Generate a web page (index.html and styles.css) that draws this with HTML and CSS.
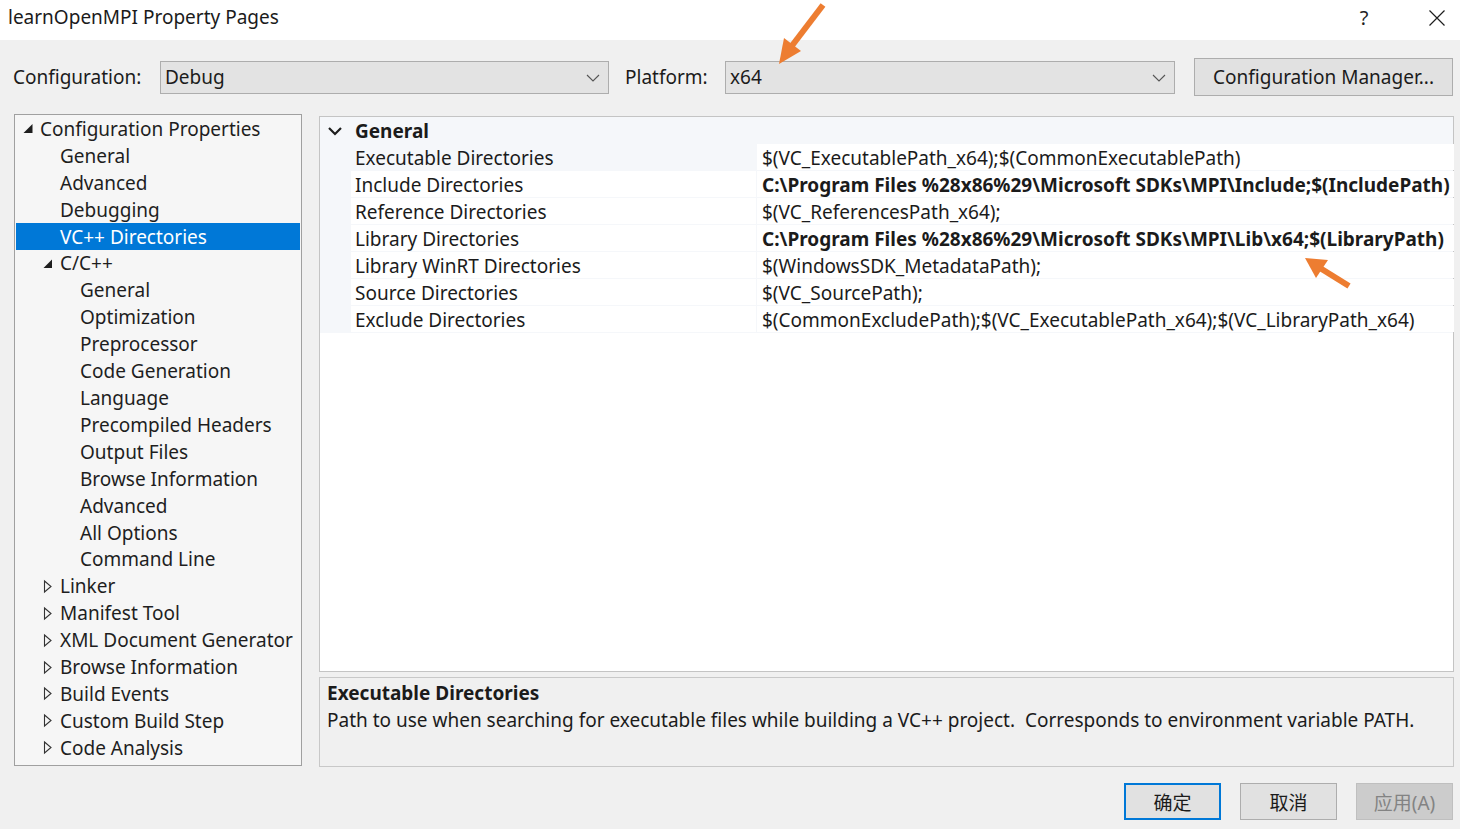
FILE: index.html
```html
<!DOCTYPE html>
<html>
<head>
<meta charset="utf-8">
<link rel="stylesheet" href="styles.css">
</head>
<body>
<div class="titlebar">
  <span class="title">learnOpenMPI Property Pages</span>
  <span class="help">?</span>
  <svg class="close" width="18" height="18" viewBox="0 0 18 18"><path d="M1.5 1.5 L16.5 16.5 M16.5 1.5 L1.5 16.5" stroke="#1e1e1e" stroke-width="1.2" fill="none"/></svg>
</div>

<div class="toolbar">
  <span class="lbl lbl-config">Configuration:</span>
  <div class="select sel-config"><span>Debug</span><svg class="dd" width="14" height="8" viewBox="0 0 14 8"><path d="M1 1 L7 7 L13 1" stroke="#555" stroke-width="1.1" fill="none"/></svg></div>
  <span class="lbl lbl-platform">Platform:</span>
  <div class="select sel-platform"><span>x64</span><svg class="dd" width="14" height="8" viewBox="0 0 14 8"><path d="M1 1 L7 7 L13 1" stroke="#555" stroke-width="1.1" fill="none"/></svg></div>
  <button class="btn btn-cm">Configuration Manager...</button>
</div>

<div class="main">
  <div class="tree">
    <div class="node l0"><span class="tog"><svg width="20" height="27" viewBox="0 0 20 27"><path d="M3.5 18 L12.5 18 L12.5 9 Z" fill="#1e1e1e"/></svg></span>Configuration Properties</div>
    <div class="node l1"><span class="tog"></span>General</div>
    <div class="node l1"><span class="tog"></span>Advanced</div>
    <div class="node l1"><span class="tog"></span>Debugging</div>
    <div class="node l1 sel"><span class="tog"></span>VC++ Directories</div>
    <div class="node l1"><span class="tog"><svg width="20" height="27" viewBox="0 0 20 27"><path d="M3.5 18 L12 18 L12 9.5 Z" fill="#1e1e1e"/></svg></span>C/C++</div>
    <div class="node l2"><span class="tog"></span>General</div>
    <div class="node l2"><span class="tog"></span>Optimization</div>
    <div class="node l2"><span class="tog"></span>Preprocessor</div>
    <div class="node l2"><span class="tog"></span>Code Generation</div>
    <div class="node l2"><span class="tog"></span>Language</div>
    <div class="node l2"><span class="tog"></span>Precompiled Headers</div>
    <div class="node l2"><span class="tog"></span>Output Files</div>
    <div class="node l2"><span class="tog"></span>Browse Information</div>
    <div class="node l2"><span class="tog"></span>Advanced</div>
    <div class="node l2"><span class="tog"></span>All Options</div>
    <div class="node l2"><span class="tog"></span>Command Line</div>
    <div class="node l1"><span class="tog"><svg width="20" height="27" viewBox="0 0 20 27"><path d="M4.5 8 L11 13.5 L4.5 19 Z" stroke="#333" stroke-width="1.1" fill="none"/></svg></span>Linker</div>
    <div class="node l1"><span class="tog"><svg width="20" height="27" viewBox="0 0 20 27"><path d="M4.5 8 L11 13.5 L4.5 19 Z" stroke="#333" stroke-width="1.1" fill="none"/></svg></span>Manifest Tool</div>
    <div class="node l1"><span class="tog"><svg width="20" height="27" viewBox="0 0 20 27"><path d="M4.5 8 L11 13.5 L4.5 19 Z" stroke="#333" stroke-width="1.1" fill="none"/></svg></span>XML Document Generator</div>
    <div class="node l1"><span class="tog"><svg width="20" height="27" viewBox="0 0 20 27"><path d="M4.5 8 L11 13.5 L4.5 19 Z" stroke="#333" stroke-width="1.1" fill="none"/></svg></span>Browse Information</div>
    <div class="node l1"><span class="tog"><svg width="20" height="27" viewBox="0 0 20 27"><path d="M4.5 8 L11 13.5 L4.5 19 Z" stroke="#333" stroke-width="1.1" fill="none"/></svg></span>Build Events</div>
    <div class="node l1"><span class="tog"><svg width="20" height="27" viewBox="0 0 20 27"><path d="M4.5 8 L11 13.5 L4.5 19 Z" stroke="#333" stroke-width="1.1" fill="none"/></svg></span>Custom Build Step</div>
    <div class="node l1"><span class="tog"><svg width="20" height="27" viewBox="0 0 20 27"><path d="M4.5 8 L11 13.5 L4.5 19 Z" stroke="#333" stroke-width="1.1" fill="none"/></svg></span>Code Analysis</div>
  </div>

  <div class="right">
    <div class="grid">
      <div class="grid-head">
        <span class="chev"><svg width="16" height="10" viewBox="0 0 16 10"><path d="M2 2 L8 8 L14 2" stroke="#1e1e1e" stroke-width="2.2" fill="none"/></svg></span>
        <span class="head-text">General</span>
      </div>
      <div class="rows">
        <div class="gut"></div><div class="name cur">Executable Directories</div><div class="val">$(VC_ExecutablePath_x64);$(CommonExecutablePath)</div>
        <div class="gut"></div><div class="name">Include Directories</div><div class="val b">C:\Program Files %28x86%29\Microsoft SDKs\MPI\Include;$(IncludePath)</div>
        <div class="gut"></div><div class="name">Reference Directories</div><div class="val">$(VC_ReferencesPath_x64);</div>
        <div class="gut"></div><div class="name">Library Directories</div><div class="val b">C:\Program Files %28x86%29\Microsoft SDKs\MPI\Lib\x64;$(LibraryPath)</div>
        <div class="gut"></div><div class="name">Library WinRT Directories</div><div class="val">$(WindowsSDK_MetadataPath);</div>
        <div class="gut"></div><div class="name">Source Directories</div><div class="val">$(VC_SourcePath);</div>
        <div class="gut"></div><div class="name">Exclude Directories</div><div class="val">$(CommonExcludePath);$(VC_ExecutablePath_x64);$(VC_LibraryPath_x64)</div>
      </div>
    </div>
    <div class="desc">
      <div class="desc-title">Executable Directories</div>
      <div class="desc-text">Path to use when searching for executable files while building a VC++ project.&nbsp; Corresponds to environment variable PATH.</div>
    </div>
  </div>
</div>

<div class="footer">
  <button class="btn fbtn default">确定</button>
  <button class="btn fbtn">取消</button>
  <button class="btn fbtn disabled">应用(A)</button>
</div>

<svg class="arrows" width="1460" height="829" viewBox="0 0 1460 829">
  <line x1="823" y1="5" x2="791" y2="47" stroke="#ed7d31" stroke-width="6"/>
  <polygon points="779,64 801,51 784,38" fill="#ed7d31"/>
  <line x1="1349" y1="286" x2="1320" y2="268" stroke="#ed7d31" stroke-width="6"/>
  <polygon points="1305,258 1328,260 1316,278" fill="#ed7d31"/>
</svg>
</body>
</html>
```

FILE: styles.css
```css
* { box-sizing: border-box; }
body {
  margin: 0;
  width: 1460px;
  height: 829px;
  overflow: hidden;
  background: #f0f0f0;
  font-family: "Noto Sans", "Noto Sans CJK SC", sans-serif;
  font-size: 19px;
  color: #1b1b1b;
  position: relative;
}
.titlebar {
  height: 40px;
  background: #ffffff;
  display: flex;
  align-items: center;
  padding: 0 0 6px 8px;
}
.title { flex: 1; line-height: 34px; }
.help {
  font-size: 20px;
  width: 20px;
  text-align: center;
  margin-right: 54px;
  color: #1e1e1e;
}
.close { margin-right: 14px; margin-top: 2px; }

.toolbar {
  height: 74px;
  display: flex;
  align-items: center;
  padding-left: 13px;
}
.lbl { line-height: 33px; }
.lbl-config { width: 147px; }
.lbl-platform { width: 100px; margin-left: 16px; }
.select {
  height: 33px;
  background: #e3e3e3;
  border: 1px solid #adadad;
  display: flex;
  align-items: center;
  justify-content: space-between;
  padding: 0 8px 0 4px;
}
.sel-config { width: 449px; }
.sel-platform { width: 450px; }
.dd { margin-top: 1px; }
.btn {
  font-family: "Noto Sans", "Noto Sans CJK SC", sans-serif;
  font-size: 19px;
  color: #1b1b1b;
  background: #e1e1e1;
  border: 1px solid #adadad;
  padding: 0;
}
.btn-cm { margin-left: 19px; width: 259px; height: 38px; }

.main {
  height: 653px;
  display: flex;
  padding-left: 14px;
}
.tree {
  width: 288px;
  height: 652px;
  border: 1px solid #a0a0a0;
  background: #f6f6f6;
  padding: 0 1px 1px;
}
.node {
  height: 26.92px;
  display: flex;
  align-items: center;
  white-space: nowrap;
  color: #1e1e1e;
  padding-top: 1px;
}
.node.l0 { padding-left: 4px; }
.node.l1 { padding-left: 24px; }
.node.l2 { padding-left: 44px; }
.tog { width: 20px; height: 27px; flex: none; display: block; }
.tog svg { display: block; }
.node.sel { background: #0078d7; color: #ffffff; }

.right {
  margin-left: 17px;
  width: 1135px;
  padding-top: 2px;
}
.grid {
  height: 556px;
  border: 1px solid #c4c4c4;
  background: #ffffff;
}
.grid-head {
  height: 27px;
  background: #f5f7fa;
  display: flex;
  align-items: center;
}
.chev { width: 35px; padding-left: 7px; display: flex; align-items: center; }
.head-text { font-weight: 700; }
.rows {
  display: grid;
  grid-template-columns: 30px 405px 697px;
  grid-auto-rows: 26px;
  column-gap: 1px;
  row-gap: 1px;
  background: #f5f7fa;
  padding-bottom: 1px;
}
.name, .val {
  background: #ffffff;
  display: flex;
  align-items: center;
  white-space: nowrap;
  overflow: hidden;
  padding-top: 2px;
}
.name { padding-left: 4px; }
.name.cur { background: transparent; }
.val { padding-left: 5px; }
.val.b { font-weight: 700; }

.desc {
  margin-top: 5px;
  height: 90px;
  border: 1px solid #c8c8c8;
  padding: 2px 8px 0 7px;
}
.desc-title { font-weight: 700; line-height: 27px; }
.desc-text { line-height: 27px; white-space: nowrap; }

.footer {
  display: flex;
  justify-content: flex-end;
  gap: 19px;
  padding: 16px 7px 0 0;
}
.fbtn { width: 97px; height: 37px; }
.fbtn.default { border: 2px solid #0078d7; }
.fbtn.disabled { background: #cccccc; border-color: #bfbfbf; color: #838383; }

.arrows {
  position: absolute;
  left: 0;
  top: 0;
  pointer-events: none;
}
```
